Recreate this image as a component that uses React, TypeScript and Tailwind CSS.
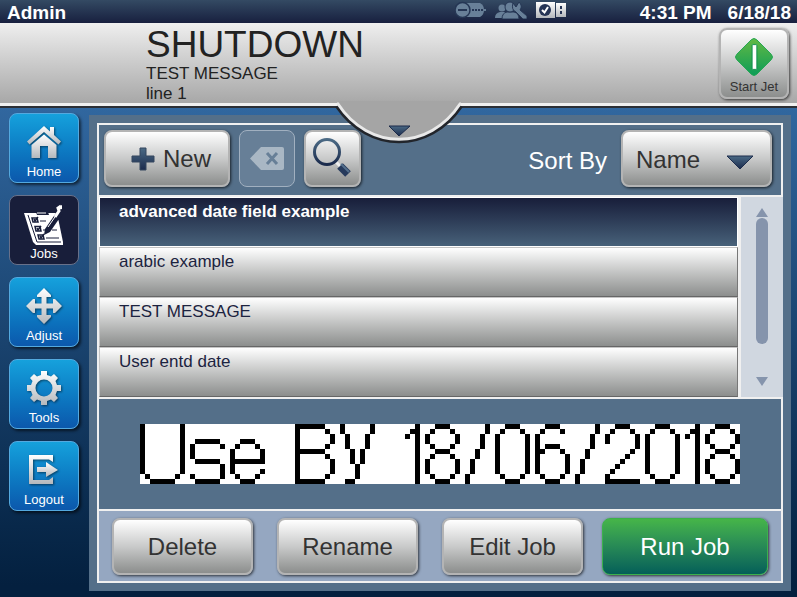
import React from 'react';

const DOT_FONT: Record<string, string[]> = {
    U: ['#.......#', '#.......#', '#.......#', '#.......#', '#.......#', '#.......#', '#.......#', '#.......#', '#.......#', '#.......#', '.#.....#.', '..#####..'],
    s: ['.......', '.......', '.......', '.#####.', '#.....#', '#......', '#......', '.#####.', '......#', '......#', '#.....#', '.#####.'],
    e: ['.......', '.......', '.......', '..###..', '.#...#.', '#.....#', '#.....#', '#######', '#......', '#.....#', '.#...#.', '..###..'],
    B: ['######..', '#.....#.', '#......#', '#......#', '#.....#.', '######..', '#.....#.', '#......#', '#......#', '#......#', '#.....#.', '######..'],
    Y: ['#.....#', '#.....#', '.#...#.', '.#...#.', '.#...#.', '..#.#..', '..#.#..', '..#.#..', '...#...', '...#...', '...#...', '.##....'],
    '0': ['..###..', '.#...#.', '#.....#', '#.....#', '#.....#', '#.....#', '#.....#', '#.....#', '#.....#', '#.....#', '.#...#.', '..###..'],
    '1': ['..#', '.##', '#.#', '..#', '..#', '..#', '..#', '..#', '..#', '..#', '..#', '..#'],
    '2': ['..###..', '.#...#.', '#.....#', '#.....#', '......#', '.....#.', '....#..', '...#...', '..#....', '.#.....', '#......', '#######'],
    '6': ['..###..', '.#...#.', '#......', '#......', '#.###..', '##...#.', '#.....#', '#.....#', '#.....#', '#.....#', '.#...#.', '..###..'],
    '8': ['..###..', '.#...#.', '#.....#', '#.....#', '.#...#.', '..###..', '.#...#.', '#.....#', '#.....#', '#.....#', '.#...#.', '..###..'],
    '/': ['....#', '....#', '...#.', '...#.', '...#.', '..#..', '..#..', '.#...', '.#...', '.#...', '#....', '#....'],
    ' ': Array(12).fill('....'),
};

const jobs = ['advanced date field example', 'arabic example', 'TEST MESSAGE', 'User entd date'];

const grayButton =
    'rounded-lg border-2 border-[#b4b4b4] bg-linear-to-b from-white via-[#c9caca] to-[#8c8e8d] text-[#333] shadow-[1px_1px_3px_rgba(0,0,0,0.7)]';

// Dots as the print head will lay them down, 12 rows high
const PrintPreview = ({ message }: { message: string }) => {
    const rows = Array.from({ length: 12 }, (_, y) => [...message].map(ch => DOT_FONT[ch][y]).join('.'));
    const width = rows[0].length;

    return (
        <svg role="img" aria-label={message} viewBox={`0 0 ${width} 12`} className="w-[600px] bg-white" shapeRendering="crispEdges">
            {rows.map((row, y) =>
                [...row].map((dot, x) => (dot === '#' ? <rect key={`${x}-${y}`} x={x} y={y} width="1" height="1" /> : null))
            )}
        </svg>
    );
};

const Gradients = () => (
    <svg className="absolute size-0" aria-hidden="true">
        <defs>
            <linearGradient id="silver" x1="0" y1="0" x2="0" y2="1">
                <stop offset="0" stopColor="#ffffff" />
                <stop offset="1" stopColor="#b4b8bc" />
            </linearGradient>
            <linearGradient id="navy" x1="0" y1="0" x2="0" y2="1">
                <stop offset="0" stopColor="#4b6a85" />
                <stop offset="1" stopColor="#1a2a4c" />
            </linearGradient>
            <linearGradient id="green" x1="0" y1="0" x2="0" y2="1">
                <stop offset="0" stopColor="#62b944" />
                <stop offset="1" stopColor="#0c9c58" />
            </linearGradient>
        </defs>
    </svg>
);

const HomeIcon = () => (
    <svg viewBox="0 0 36 36" className="size-9 drop-shadow-[1px_1px_1px_rgba(0,0,0,0.5)]" fill="url(#silver)">
        <path d="M18 2 24 7.500V3H28V11L35 17.500 32.500 20.500 18 8 3.500 20.500 1 17.500Z" />
        <path d="M18 10.500 30.500 21V34H22V22H14V34H5.500V21Z" />
    </svg>
);

const JobsIcon = () => (
    <svg viewBox="0 0 40 42" className="h-[42px] w-10" fill="none">
        <path d="M0 9H33L39 38V41H12L9 38Z" fill="#fff" />
        <path d="M4 11 13 38H37" stroke="#181e3a" strokeWidth="1" />
        <path d="M12 8H24L25 11H13Z" fill="#181e3a" />
        <path d="M13 9H22" stroke="#fff" strokeWidth="1" />
        <path d="M8 14H13L14 18H9ZM11 22.500H16L17 27H12ZM14 31H19L20 35H15Z" stroke="#181e3a" strokeWidth="1.500" />
        <path d="M10 15 11 17 14 13M13 24 14 26 17 22M16 32 17 34 20 30" stroke="#181e3a" strokeWidth="1.500" />
        <path d="M16 17H22M19 26H21M28 26H33M22 34H35" stroke="#181e3a" strokeWidth="1" />
        <path d="M20 31 21 25 32 9 37 12 26 28Z" fill="#181e3a" />
        <path d="M33 15 37 10" stroke="#181e3a" strokeWidth="4" />
        <path d="M24 23 33 10" stroke="#fff" strokeWidth="1" />
        <path d="M31 13 35 7 34 4 37 2" stroke="#fff" strokeWidth="3" />
        <path d="M34 3 38 1V5L34 6Z" fill="#fff" />
    </svg>
);

const AdjustIcon = () => (
    <svg viewBox="0 0 36 36" className="size-9 drop-shadow-[1px_1px_1px_rgba(0,0,0,0.5)]" fill="url(#silver)">
        <path d="M18 0 25 7V9H20.500V15.500H27V11H29L36 18 29 25H27V20.500H20.500V27H25V29L18 36 11 29V27H15.500V20.500H9V25H7L0 18 7 11H9V15.500H15.500V9H11V7Z" />
    </svg>
);

const ToolsIcon = () => (
    <svg viewBox="0 0 36 36" className="size-9 drop-shadow-[1px_1px_1px_rgba(0,0,0,0.5)]">
        <path
            fill="url(#silver)"
            fillRule="evenodd"
            d="M15 1H21V5L25 6.500 28 4 32 8 29.500 11 31 15H35V21H31L29.500 25 32 28 28 32 25 29.500 21 31V35H15V31L11 29.500 8 32 4 28 6.500 25 5 21H1V15H5L6.500 11 4 8 8 4 11 6.500 15 5ZM18 9.500A8.500 8.500 0 1 0 18 26.500 8.500 8.500 0 1 0 18 9.500Z"
        />
    </svg>
);

const LogoutIcon = () => (
    <svg viewBox="0 0 36 36" className="size-9 drop-shadow-[1px_1px_1px_rgba(0,0,0,0.5)]" fill="url(#silver)">
        <path d="M3 3H27V10L23 7.500H7V28H23L27 25V32H3Z" />
        <path d="M11 15H20V10L32 18 20 25V20H11Z" />
    </svg>
);

const navItems = [
    { label: 'Home', icon: HomeIcon },
    { label: 'Jobs', icon: JobsIcon },
    { label: 'Adjust', icon: AdjustIcon },
    { label: 'Tools', icon: ToolsIcon },
    { label: 'Logout', icon: LogoutIcon },
];

const StatusIcons = () => (
    <div className="flex gap-2">
        <svg viewBox="0 0 32 18" className="h-[18px] w-8" fill="#688098">
            <path d="M10 2H25Q29 4 29 9T25 16H10Z" />
            <circle cx="7.500" cy="9" r="7.500" stroke="#253654" strokeWidth="1.500" />
            <path d="M3 9H12" stroke="#253654" strokeWidth="2" />
            <path d="M17 9H29" stroke="#253654" strokeWidth="2" strokeDasharray="2 1" />
            <path d="M29 9H31" stroke="#688098" strokeWidth="2" />
        </svg>
        <svg viewBox="0 0 32 18" className="h-[18px] w-8" fill="#688098">
            <circle cx="7" cy="7" r="3.500" />
            <path d="M0 17Q0 12 5 11H11Q13 12 13 17Z" />
            <g stroke="#253654" strokeWidth="1">
                <path d="M7 18Q7 12 12 11H19Q24 12 24 18Z" />
                <circle cx="15" cy="6" r="5" />
                <path d="M18 2 21 6 24 1Q28 5 25 9L32 15V18H28L21 11Q16 9 18 2Z" />
            </g>
        </svg>
        <svg viewBox="0 0 32 18" className="h-[18px] w-8">
            <path d="M1 1H20V17H1Z" fill="url(#silver)" />
            <path d="M21 2H31V16H21Z" fill="url(#silver)" />
            <circle cx="10" cy="9" r="6" fill="#253455" />
            <path d="M7 9 9.500 11.500 13 6" stroke="#fff" strokeWidth="2" fill="none" />
            <path d="M25 5H27V8H25ZM25 10H27V13H25Z" fill="#253455" />
        </svg>
    </div>
);

const App = () => {
    return (
        <div className="flex min-h-screen flex-col bg-linear-to-b from-[#31679f] from-[18%] to-[#04203f] to-[98%] font-['Liberation_Sans',Arial,sans-serif]">
            <Gradients />

            <div className="grid h-[23px] grid-cols-[1fr_auto_1fr] items-start bg-linear-to-b from-[#344a63] to-[#18203f] pr-[6px] pl-[7px] text-[19px] leading-[26px] font-bold text-white">
                <div>Admin</div>
                <div className="ml-56 pt-px">
                    <StatusIcons />
                </div>
                <div className="flex justify-end gap-4">
                    <span>4:31 PM</span>
                    <span>6/18/18</span>
                </div>
            </div>

            <header className="relative flex h-[85px] justify-between border-b-2 border-[#2c2f35] bg-linear-to-b from-[#efefef] to-[#a5a5a5] pr-2">
                <div className="pl-[146px] text-[17px] leading-5 text-[#222]">
                    <h1 className="pt-[3px] text-[37px] leading-[38px]">SHUTDOWN</h1>
                    <p>TEST MESSAGE</p>
                    <p>line 1</p>
                </div>
                <button className={`mt-[5px] flex h-[71px] w-[70px] flex-col items-center gap-0.5 pt-[7px] text-[13px] ${grayButton}`}>
                    <svg viewBox="0 0 42 42" className="size-10 shrink-0">
                        <path d="M18 3Q21 0 24 3L39 18Q42 21 39 24L24 39Q21 42 18 39L3 24Q0 21 3 18Z" fill="url(#green)" stroke="#22a552" />
                        <rect x="19" y="8" width="5" height="26" rx="1" fill="#fff" stroke="#0c8c4c" />
                    </svg>
                    <span className="leading-4">Start Jet</span>
                </button>
                <div className="absolute inset-x-0 bottom-0 h-[3px] bg-[#f0f0f0]" />
                <button aria-label="Show details" className="absolute top-[78px] left-1/2 z-10 -translate-x-1/2">
                    <svg viewBox="0 0 128 44" className="h-11 w-32">
                        <path d="M2 5C34 52 94 52 126 5" fill="none" stroke="#22252b" strokeWidth="4" />
                        <path d="M3 0V3C34 50 94 50 125 3V0Z" fill="#a5a5a5" />
                        <path d="M2 3H3C34 50 94 50 125 3H126" fill="none" stroke="#e9e9e9" strokeWidth="3" />
                        <path d="M54 25H75L64 35Z" fill="url(#navy)" stroke="#1a2848" />
                    </svg>
                </button>
            </header>

            <div className="flex flex-1">
                <nav className="flex flex-col gap-3 px-[9px] pt-[5px]">
                    {navItems.map(({ label, icon: Icon }) => (
                        <button
                            key={label}
                            className={`flex h-[70px] w-[70px] flex-col items-center justify-end rounded-lg border pb-0.5 text-[13px] leading-4 text-white ${label === 'Jobs' ? 'border-[#68718a] bg-[#181e3a]' : 'border-[#54a9df] bg-linear-to-b from-[#16a1dc] to-[#0c58ac] shadow-[2px_2px_3px_rgba(0,0,0,0.6)]'}`}
                        >
                            <span className={label === 'Jobs' ? '' : 'mb-1'}>
                                <Icon />
                            </span>
                            {label}
                        </button>
                    ))}
                </nav>

                <main className="mt-[7px] mr-[6px] mb-[6px] ml-px flex flex-1 flex-col bg-[#546f89] p-2">
                    <div className="flex flex-1 flex-col border-2 border-[#f0f0f0]">
                        <div className="flex h-[70px] items-start pt-[5px] pr-[9px] pl-[5px]">
                            <button className={`flex h-[57px] w-[126px] items-center justify-center gap-2 pl-2 text-2xl ${grayButton}`}>
                                <svg viewBox="0 0 24 24" className="size-6">
                                    <path d="M9 1H15V9H23V15H15V23H9V15H1V9H9Z" fill="url(#navy)" stroke="#34475f" />
                                </svg>
                                New
                            </button>
                            <button aria-label="Clear" className="ml-[9px] flex h-[57px] w-14 items-center justify-center rounded-lg border border-[#a1b0c0] bg-[#677f97]">
                                <svg viewBox="0 0 34 23" className="h-[23px] w-[34px]">
                                    <path d="M0 11.500 11 0H32Q34 0 34 2V21Q34 23 32 23H11Z" fill="#a9b7c4" />
                                    <path d="M17 6 27 17M27 6 17 17" stroke="#677f97" strokeWidth="3" />
                                </svg>
                            </button>
                            <button aria-label="Search" className={`ml-[9px] flex h-[57px] w-[57px] items-center justify-center ${grayButton}`}>
                                <svg viewBox="0 0 42 42" className="size-[42px]" fill="none">
                                    <path d="M24 24 31 31" stroke="#eee" strokeWidth="3" />
                                    <circle cx="15" cy="14" r="12.500" stroke="url(#navy)" strokeWidth="3" />
                                    <path d="M28 28 36 36" stroke="#263a5c" strokeWidth="8" />
                                    <path d="M29 26 37 34" stroke="#536f8c" strokeWidth="2" />
                                </svg>
                            </button>
                            <label htmlFor="sort" className="ml-auto text-2xl leading-[62px] text-white">
                                Sort By
                            </label>
                            <div className="relative ml-[14px]">
                                <select id="sort" className={`h-[57px] w-[151px] appearance-none pt-0.5 pl-[13px] text-2xl ${grayButton}`}>
                                    <option>Name</option>
                                </select>
                                <svg viewBox="0 0 28 15" className="pointer-events-none absolute top-[25px] right-[18px] h-[15px] w-7">
                                    <path d="M1 1H27L14 14Z" fill="url(#navy)" stroke="#1d2c4c" />
                                </svg>
                            </div>
                        </div>

                        <div className="-mr-0.5 flex h-[204px] border-y-2 border-[#f0f0f0] bg-[#f0f0f0]">
                            <ul className="mr-[3px] flex-1">
                                {jobs.map((job, i) => (
                                    <li key={job} className="h-[50px]">
                                        <button
                                            className={`flex h-full w-full items-start border px-[19px] pt-0.5 text-[17px] leading-6 ${i === 0 ? 'border-white bg-linear-to-b from-[#181e3a] to-[#48627a] font-bold text-white' : 'border-t-[#c4c4c4] border-r-[#777] border-b-[#666] border-l-[#c4c4c4] bg-linear-to-b from-white to-[#8c8e8d] text-[#1c2340]'}`}
                                        >
                                            {job}
                                        </button>
                                    </li>
                                ))}
                            </ul>
                            <div className="flex w-[42px] flex-col items-center justify-between bg-[#d0d7e0] pt-[11px] pb-[11px]">
                                <svg viewBox="0 0 12 9" className="h-[9px] w-3">
                                    <path d="M6 0 12 9H0Z" fill="#8594ac" />
                                </svg>
                                <div className="mt-px mb-auto h-[126px] w-3 rounded-full bg-[#8594ac]" />
                                <svg viewBox="0 0 12 9" className="h-[9px] w-3">
                                    <path d="M0 0H12L6 9Z" fill="#8594ac" />
                                </svg>
                            </div>
                        </div>

                        <div className="flex flex-1 items-center justify-center">
                            <PrintPreview message="Use BY 18/06/2018" />
                        </div>

                        <div className="flex h-[72px] items-center justify-between border-t-2 border-[#f0f0f0] bg-[#95a7c1] px-[13px] text-2xl">
                            <div className="flex gap-6">
                                <button className={`h-[57px] w-[141px] pt-0.5 ${grayButton}`}>Delete</button>
                                <button className={`h-[57px] w-[141px] pt-0.5 ${grayButton}`}>Rename</button>
                                <button className={`h-[57px] w-[141px] pt-0.5 ${grayButton}`}>Edit Job</button>
                            </div>
                            <button className="h-[57px] w-[166px] rounded-lg border border-[#3cb04c] bg-linear-to-b from-[#46b548] to-[#045f58] pt-0.5 text-white shadow-[1px_1px_3px_rgba(0,0,0,0.7)]">
                                Run Job
                            </button>
                        </div>
                    </div>
                </main>
            </div>
        </div>
    );
};

export default App;
